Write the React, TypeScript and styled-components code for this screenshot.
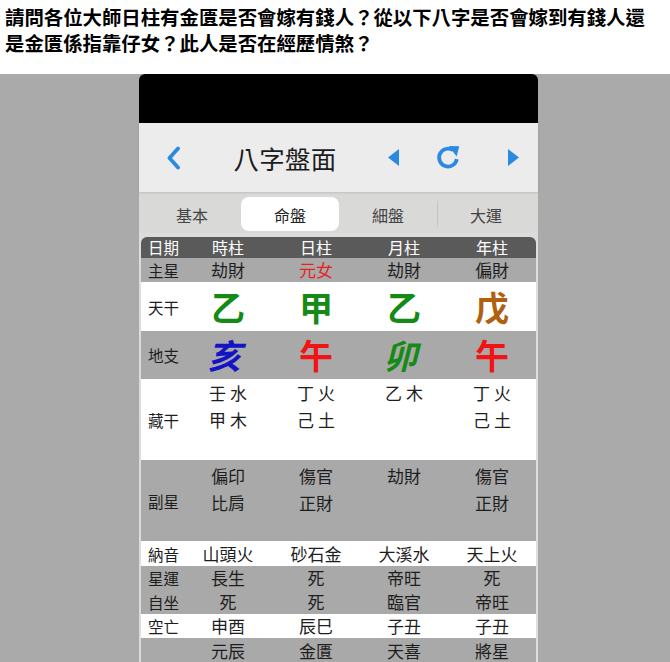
import React from "react";
import styled, { createGlobalStyle } from "styled-components";

const GlobalStyle = createGlobalStyle`
  html, body {
    margin: 0;
    padding: 0;
    background: #ffffff;
    overflow: hidden;
  }
  body {
    font-family: "Noto Sans CJK TC", "Noto Sans", sans-serif;
    color: #1e1e1e;
  }
`;

const BLUE = "#2a8ae3";
const GREEN = "#168a16";
const RED = "#f21414";

type Tone = "head" | "gray" | "white";

type Stem = { text: string; color: string; slant?: boolean };

type RowData =
  | { kind: "text"; label: string; tone: Tone; h: number; cells: (string | Stem)[] }
  | { kind: "big"; label: string; tone: Tone; h: number; cells: Stem[] }
  | { kind: "stack"; label: string; tone: Tone; h: number; pad: number; cells: string[][] };

const rows: RowData[] = [
  { kind: "text", label: "日期", tone: "head", h: 21, cells: ["時柱", "日柱", "月柱", "年柱"] },
  {
    kind: "text",
    label: "主星",
    tone: "gray",
    h: 24,
    cells: ["劫財", { text: "元女", color: "#e42222" }, "劫財", "偏財"],
  },
  {
    kind: "big",
    label: "天干",
    tone: "white",
    h: 49,
    cells: [
      { text: "乙", color: GREEN },
      { text: "甲", color: GREEN },
      { text: "乙", color: GREEN },
      { text: "戊", color: "#b0600f" },
    ],
  },
  {
    kind: "big",
    label: "地支",
    tone: "gray",
    h: 48,
    cells: [
      { text: "亥", color: "#1414c4", slant: true },
      { text: "午", color: RED },
      { text: "卯", color: GREEN, slant: true },
      { text: "午", color: RED },
    ],
  },
  {
    kind: "stack",
    label: "藏干",
    tone: "white",
    h: 81,
    pad: 0,
    cells: [["壬 水", "甲 木"], ["丁 火", "己 土"], ["乙 木"], ["丁 火", "己 土"]],
  },
  {
    kind: "stack",
    label: "副星",
    tone: "gray",
    h: 81,
    pad: 2,
    cells: [["偏印", "比肩"], ["傷官", "正財"], ["劫財"], ["傷官", "正財"]],
  },
  { kind: "text", label: "納音", tone: "white", h: 25, cells: ["山頭火", "砂石金", "大溪水", "天上火"] },
  { kind: "text", label: "星運", tone: "gray", h: 24, cells: ["長生", "死", "帝旺", "死"] },
  { kind: "text", label: "自坐", tone: "gray", h: 24, cells: ["死", "死", "臨官", "帝旺"] },
  { kind: "text", label: "空亡", tone: "white", h: 24, cells: ["申酉", "辰巳", "子丑", "子丑"] },
  { kind: "text", label: "", tone: "gray", h: 26, cells: ["元辰", "金匱", "天喜", "將星"] },
];

const tabs = ["基本", "命盤", "細盤", "大運"];
const ACTIVE_TAB = 1;

const App: React.FC = () => {
  return (
    <>
      <GlobalStyle />
      <Question>
        <QuestionLine>請問各位大師日柱有金匱是否會嫁有錢人？從以下八字是否會嫁到有錢人還</QuestionLine>
        <QuestionLine>是金匱係指靠仔女？此人是否在經歷情煞？</QuestionLine>
      </Question>
      <Stage>
        <Phone>
          <StatusBar />
          <NavBar>
            <NavSlot>
              <svg width="15" height="24" viewBox="0 0 15 24">
                <polyline
                  points="12,2.5 3.5,12 12,21.5"
                  fill="none"
                  stroke={BLUE}
                  strokeWidth="3.8"
                  strokeLinecap="round"
                  strokeLinejoin="round"
                />
              </svg>
            </NavSlot>
            <NavTitle>八字盤面</NavTitle>
            <NavSlot>
              <svg width="11" height="17" viewBox="0 0 11 17">
                <polygon points="11,0 0,8.5 11,17" fill={BLUE} />
              </svg>
            </NavSlot>
            <NavSlot>
              <svg width="27" height="25" viewBox="0 0 26 24">
                <path
                  d="M21 13.6 A8.6 8.6 0 1 1 17.4 5"
                  fill="none"
                  stroke={BLUE}
                  strokeWidth="3.6"
                  strokeLinecap="butt"
                />
                <polygon points="13.4,1 23.4,1.2 20.8,11" fill={BLUE} />
              </svg>
            </NavSlot>
            <NavSlot $end>
              <svg width="11" height="17" viewBox="0 0 11 17">
                <polygon points="0,0 11,8.5 0,17" fill={BLUE} />
              </svg>
            </NavSlot>
          </NavBar>
          <TabBar>
            {tabs.map((t, i) => (
              <Tab key={t} $active={i === ACTIVE_TAB} $divider={i === 3}>
                {t}
              </Tab>
            ))}
          </TabBar>
          <Table>
            {rows.map((r, ri) => (
              <Row key={ri} $tone={r.tone} $h={r.h}>
                <Label>{r.label}</Label>
                {r.kind === "text" &&
                  r.cells.map((c, ci) =>
                    typeof c === "string" ? (
                      <Cell key={ci} $tone={r.tone}>{c}</Cell>
                    ) : (
                      <Cell key={ci} $tone={r.tone} style={{ color: c.color }}>
                        {c.text}
                      </Cell>
                    )
                  )}
                {r.kind === "big" &&
                  r.cells.map((c, ci) => (
                    <Cell key={ci} $tone={r.tone}>
                      <BigChar $color={c.color} $slant={c.slant}>
                        {c.text}
                      </BigChar>
                    </Cell>
                  ))}
                {r.kind === "stack" &&
                  r.cells.map((lines, ci) => (
                    <StackCell key={ci} $pad={r.pad}>
                      {lines.map((l) => (
                        <span key={l}>{l}</span>
                      ))}
                    </StackCell>
                  ))}
              </Row>
            ))}
          </Table>
        </Phone>
      </Stage>
    </>
  );
};

export default App;

/* styles */
const Question = styled.div`
  padding: 4px 0 18px 5px;
  font-size: 19.4px;
  line-height: 26px;
  font-weight: 700;
  color: #000;
`;

const QuestionLine = styled.div`
  white-space: nowrap;
`;

const Stage = styled.div`
  height: 588px;
  overflow: hidden;
  background: #aaaaaa;
  display: flex;
  padding-left: 139px;
`;

const Phone = styled.div`
  width: 399px;
  background: #dcdcdc;
  border-radius: 6px 6px 0 0;
  display: flex;
  flex-direction: column;
`;

const StatusBar = styled.div`
  height: 49px;
  flex-shrink: 0;
  background: #000;
  border-radius: 6px 6px 0 0;
`;

const NavBar = styled.div`
  height: 69px;
  flex-shrink: 0;
  background: #ececec;
  box-shadow: 0 1px 2px rgba(0, 0, 0, 0.12);
  display: grid;
  grid-template-columns: 68px 156px 60px 50px 1fr;
  align-items: center;
  position: relative;
`;

const NavSlot = styled.div<{ $end?: boolean }>`
  display: flex;
  justify-content: ${(p) => (p.$end ? "flex-end" : "center")};
  padding-right: ${(p) => (p.$end ? "19px" : "0")};
  align-items: center;
  height: 100%;
`;

const NavTitle = styled.div`
  text-align: center;
  font-size: 25.5px;
  font-weight: 400;
  color: #1c1c1c;
  letter-spacing: 0.2px;
`;

const TabBar = styled.div`
  height: 41px;
  flex-shrink: 0;
  padding: 5px 3px 2px 4px;
  box-sizing: border-box;
  background: #d9d9d7;
  display: grid;
  grid-template-columns: repeat(4, 98px);
`;

const Tab = styled.div<{ $active?: boolean; $divider?: boolean }>`
  display: flex;
  align-items: center;
  justify-content: center;
  font-size: 16px;
  color: ${(p) => (p.$active ? "#222" : "#444")};
  background: ${(p) => (p.$active ? "#ffffff" : "transparent")};
  border-radius: 8px;
  position: relative;
  padding-top: 1px;

  &::before {
    content: "";
    display: ${(p) => (p.$divider ? "block" : "none")};
    position: absolute;
    left: 0;
    top: 4px;
    bottom: 4px;
    width: 1px;
    background: #c4c4c2;
  }
`;

const Table = styled.div`
  margin: 4px 2px 0 2px;
  flex-shrink: 0;
`;

const toneBg = (t: Tone) =>
  t === "head" ? "#5a5a5a" : t === "gray" ? "#a9a9a9" : "#ffffff";

const Row = styled.div<{ $tone: Tone; $h: number }>`
  display: grid;
  grid-template-columns: 43px repeat(4, 88px);
  height: ${(p) => p.$h}px;
  line-height: ${(p) => Math.min(p.$h, 24)}px;
  background: ${(p) => toneBg(p.$tone)};
  color: ${(p) => (p.$tone === "head" ? "#ffffff" : "#1e1e1e")};
  border-radius: ${(p) => (p.$tone === "head" ? "6px 6px 0 0" : "0")};
`;

const Label = styled.div`
  display: flex;
  align-items: center;
  padding-left: 7px;
  font-size: 15.5px;
  white-space: nowrap;
`;

const Cell = styled.div<{ $tone: Tone }>`
  display: flex;
  align-items: center;
  justify-content: center;
  font-size: ${(p) => (p.$tone === "head" ? "16px" : "17px")};
  white-space: nowrap;
`;

const StackCell = styled.div<{ $pad: number }>`
  display: flex;
  flex-direction: column;
  align-items: center;
  padding-top: ${(p) => p.$pad}px;
  font-size: 17px;
  line-height: 27px;
  white-space: pre;
`;

const BigChar = styled.span<{ $color: string; $slant?: boolean }>`
  font-size: 34px;
  font-weight: 700;
  line-height: 1;
  color: ${(p) => p.$color};
  display: inline-block;
  transform: ${(p) => (p.$slant ? "skewX(-14deg)" : "none")};
`;
